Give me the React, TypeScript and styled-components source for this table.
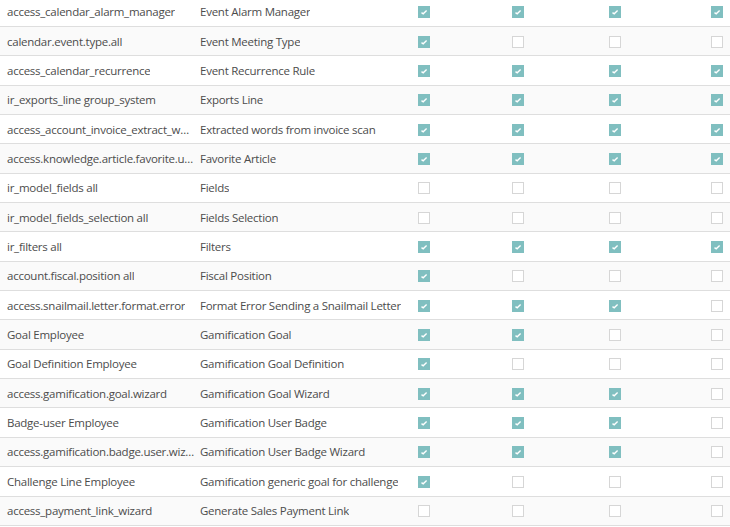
import React from "react";
import styled, { createGlobalStyle } from "styled-components";

const Global = createGlobalStyle`
  html, body { margin: 0; padding: 0; background: #ffffff; overflow: hidden; }
  body { font-family: "Open Sans", "Noto Sans", sans-serif; }
`;

const Table = styled.div`
  width: 730px;
  margin-top: -2.35px;
  display: grid;
  grid-template-columns: 195px 215px 94px 97px 102px 1fr;
`;

const Row = styled.div<{ $striped: boolean }>`
  display: contents;
  & > div {
    background: ${(p) => (p.$striped ? "#fafafa" : "#ffffff")};
  }
`;

const Cell = styled.div`
  box-sizing: border-box;
  height: 29.35px;
  border-bottom: 1px solid #dedede;
  display: flex;
  align-items: center;
  font-size: 11.5px;
  letter-spacing: -0.25px;
  color: #4c4c4c;
  min-width: 0;
`;

const TextCell = styled(Cell)<{ $pad: number }>`
  padding: 0 0 0 ${(p) => p.$pad}px;
  & > span {
    white-space: nowrap;
    overflow: hidden;
    text-overflow: ellipsis;
  }
`;

const CheckCell = styled(Cell)`
  padding: 0 0 0 8px;
`;

const Box = styled.span<{ $on: boolean }>`
  box-sizing: border-box;
  width: 12px;
  height: 12px;
  margin-top: 1px;
  display: inline-flex;
  align-items: center;
  justify-content: center;
  background: ${(p) => (p.$on ? "#80bfc0" : "#ffffff")};
  border: 1px solid ${(p) => (p.$on ? "#80bfc0" : "#d6d6d6")};
`;

const Check = ({ on }: { on: boolean }) => (
  <Box $on={on}>
    {on && (
      <svg width="8" height="8" viewBox="0 0 8 8">
        <polyline
          points="1.5,4.6 3.2,5.8 6.6,2.6"
          fill="none"
          stroke="#ffffff"
          strokeWidth="1.4"
        />
      </svg>
    )}
  </Box>
);

type R = [string, string, string];

const rows: R[] = [
  ["access_calendar_alarm_manager", "Event Alarm Manager", "1111"],
  ["calendar.event.type.all", "Event Meeting Type", "1000"],
  ["access_calendar_recurrence", "Event Recurrence Rule", "1111"],
  ["ir_exports_line group_system", "Exports Line", "1111"],
  ["access_account_invoice_extract_words", "Extracted words from invoice scan", "1111"],
  ["access.knowledge.article.favorite.user", "Favorite Article", "1111"],
  ["ir_model_fields all", "Fields", "0000"],
  ["ir_model_fields_selection all", "Fields Selection", "0000"],
  ["ir_filters all", "Filters", "1111"],
  ["account.fiscal.position all", "Fiscal Position", "1000"],
  ["access.snailmail.letter.format.error", "Format Error Sending a Snailmail Letter", "1110"],
  ["Goal Employee", "Gamification Goal", "1100"],
  ["Goal Definition Employee", "Gamification Goal Definition", "1000"],
  ["access.gamification.goal.wizard", "Gamification Goal Wizard", "1110"],
  ["Badge-user Employee", "Gamification User Badge", "1110"],
  ["access.gamification.badge.user.wizard", "Gamification User Badge Wizard", "1110"],
  ["Challenge Line Employee", "Gamification generic goal for challenge", "1000"],
  ["access_payment_link_wizard", "Generate Sales Payment Link", "0000"],
];

export default function App() {
  return (
    <>
      <Global />
      <Table>
        {rows.map(([name, model, perms], i) => (
          <Row key={i} $striped={i % 2 === 1}>
            <TextCell $pad={7}>
              <span>{name}</span>
            </TextCell>
            <TextCell $pad={5}>
              <span>{model}</span>
            </TextCell>
            {perms.split("").map((p, j) => (
              <CheckCell key={j}>
                <Check on={p === "1"} />
              </CheckCell>
            ))}
          </Row>
        ))}
      </Table>
    </>
  );
}
